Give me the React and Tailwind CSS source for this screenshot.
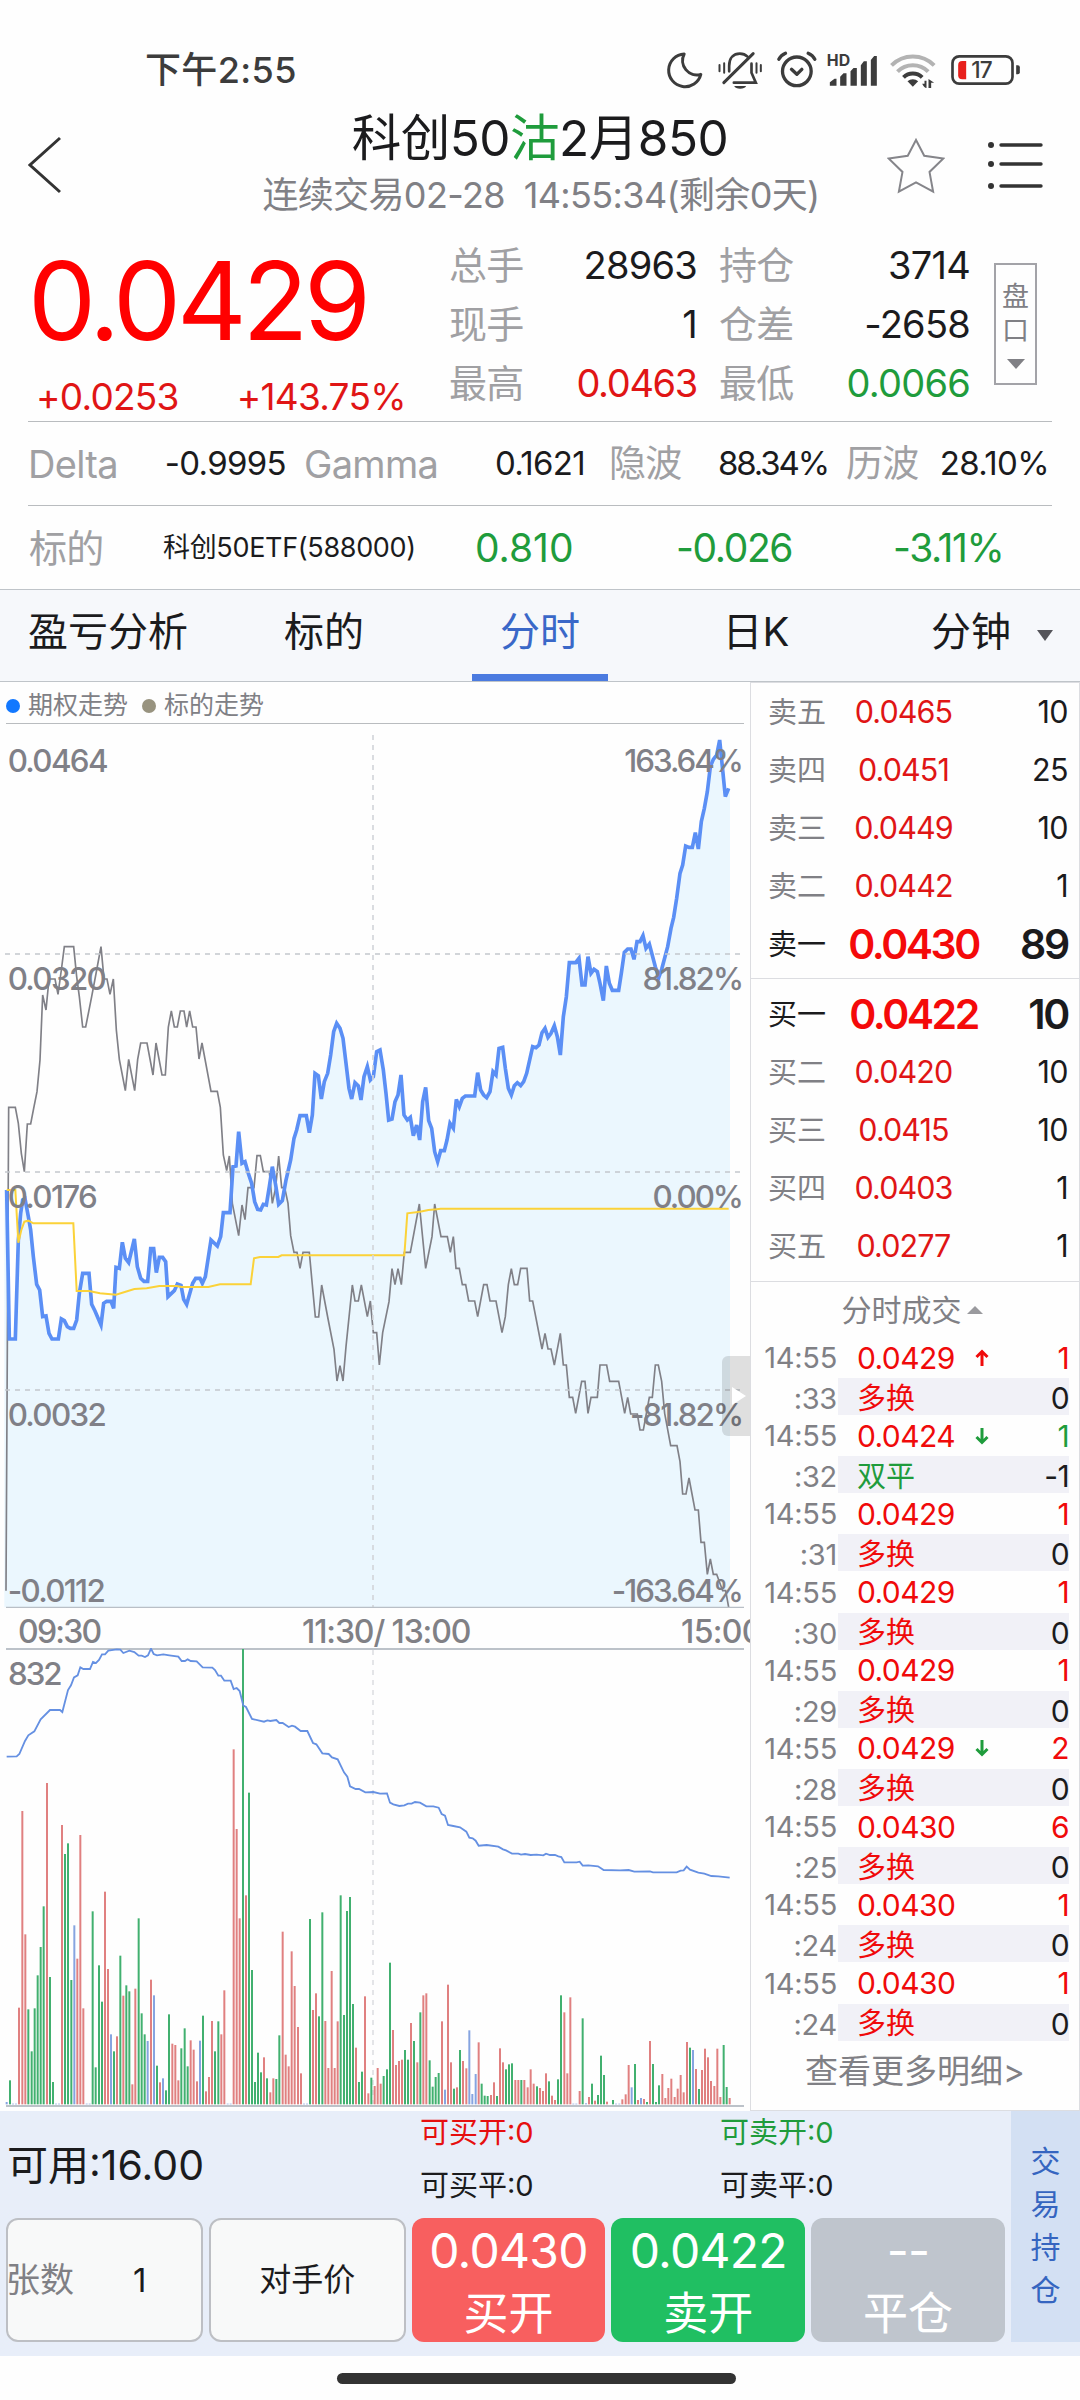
import { useState } from "react";

const tabs = ["盈亏分析", "标的", "分时", "日K", "分钟"];

const asks = [
  { label: "卖五", price: "0.0465", qty: "10" },
  { label: "卖四", price: "0.0451", qty: "25" },
  { label: "卖三", price: "0.0449", qty: "10" },
  { label: "卖二", price: "0.0442", qty: "1" },
  { label: "卖一", price: "0.0430", qty: "89", best: true },
];

const bids = [
  { label: "买一", price: "0.0422", qty: "10", best: true },
  { label: "买二", price: "0.0420", qty: "10" },
  { label: "买三", price: "0.0415", qty: "10" },
  { label: "买四", price: "0.0403", qty: "1" },
  { label: "买五", price: "0.0277", qty: "1" },
];

const ticks = [
  { sec: ":33", price: "0.0429", dir: "up", qty: "1", kind: "多换", change: "0" },
  { sec: ":32", price: "0.0424", dir: "down", qty: "1", kind: "双平", change: "-1", green: true },
  { sec: ":31", price: "0.0429", qty: "1", kind: "多换", change: "0" },
  { sec: ":30", price: "0.0429", qty: "1", kind: "多换", change: "0" },
  { sec: ":29", price: "0.0429", qty: "1", kind: "多换", change: "0" },
  { sec: ":28", price: "0.0429", dir: "down", qty: "2", kind: "多换", change: "0" },
  { sec: ":25", price: "0.0430", qty: "6", kind: "多换", change: "0" },
  { sec: ":24", price: "0.0430", qty: "1", kind: "多换", change: "0" },
  { sec: ":24", price: "0.0430", qty: "1", kind: "多换", change: "0" },
];

// Chart units are a third of a pixel. Afternoon points start from the noon offset.
const NOON = 1110;

const optionMorning =
  "20,1530 28,1977 46,1977 55,1680 62,1600 68,1560 75,1556 85,1610 92,1650 100,1730 110,1813 119,1830 128,1910 138,1908 147,1960 156,1977 175,1977 184,1917 193,1922 202,1940 211,1945 221,1945 230,1920 238,1840 248,1780 267,1780 275,1873 285,1893 303,1935 311,1870 320,1864 333,1864 341,1885 348,1762 358,1765 367,1687 376,1735 386,1748 403,1677 412,1760 422,1795 432,1804 443,1804 452,1706 461,1706 469,1778 478,1732 488,1732 497,1745 504,1850 523,1832 532,1812 543,1816 551,1858 560,1873 578,1810 587,1795 600,1795 607,1810 616,1790 633,1680 652,1698 662,1670 670,1598 690,1598 699,1460 708,1458 716,1355 726,1450 735,1445 745,1480 755,1510 764,1565 773,1588 782,1590 790,1573 799,1575 808,1520 817,1460 827,1515 836,1573 847,1562 858,1500 872,1440 882,1375 890,1350 900,1307 919,1307 928,1358 937,1305 945,1180 955,1187 964,1257 973,1205 983,1180 992,1125 1001,1055 1010,1030 1020,1045 1029,1075 1038,1150 1047,1225 1055,1257 1065,1208 1075,1218 1083,1260 1092,1190 1102,1160 1111,1200";
const optionAfternoon =
  "10,1190 20,1115 30,1110 40,1170 48,1240 56,1320 66,1317 75,1265 84,1245 93,1185 102,1305 112,1320 121,1312 130,1367 140,1335 149,1380 158,1265 167,1222 176,1322 185,1345 194,1415 203,1445 212,1412 223,1412 231,1380 240,1330 250,1345 259,1258 268,1280 277,1255 286,1248 314,1248 323,1178 332,1230 341,1245 350,1253 360,1235 369,1175 378,1185 387,1105 398,1102 406,1165 415,1225 424,1245 433,1217 442,1208 452,1217 461,1205 470,1180 488,1100 498,1103 507,1095 516,1058 525,1045 534,1072 543,1060 553,1037 562,1070 571,1125 580,1010 589,950 598,848 617,848 627,835 636,915 645,915 654,830 663,880 672,868 682,875 690,910 700,962 709,858 718,910 727,931 746,931 754,880 763,817 773,807 783,807 792,838 801,785 810,785 819,767 828,805 838,792 856,860 866,893 875,868 893,800 903,745 911,712 920,655 930,580 938,555 947,498 957,502 967,502 976,458 985,507 994,425 1003,385 1012,335 1021,260 1030,238 1040,225 1049,180 1058,270 1066,350 1076,325";

const underlyingMorning =
  "18,2732 22,2000 26,1282 46,1282 55,1330 64,1420 73,1475 82,1332 92,1332 101,1285 111,1235 120,1140 128,945 138,990 147,897 165,897 174,943 184,870 193,800 221,800 230,890 238,950 248,1041 257,1041 275,950 285,897 303,800 312,897 321,897 330,943 340,897 349,1050 358,1138 376,1232 386,1138 404,1232 413,1138 422,1089 441,1089 459,1185 468,1089 486,1185 496,1185 505,1041 514,993 523,1041 532,1041 541,993 552,993 560,1041 569,993 578,1041 588,1041 597,1137 606,1089 633,1234 652,1234 661,1282 670,1425 680,1472 688,1428 697,1570 716,1667 726,1575 735,1619 744,1523 762,1523 771,1427 781,1427 790,1475 808,1475 817,1570 827,1523 836,1428 845,1523 854,1523 864,1570 872,1667 882,1717 891,1717 900,1765 909,1717 928,1717 937,1815 946,1911 956,1911 965,1815 983,1911 1002,2008 1011,2103 1020,2057 1029,2103 1038,2000 1057,1815 1065,1863 1075,1863 1084,1815 1102,1910 1111,1863";
const underlyingAfternoon =
  "10,1958 20,1958 28,2055 38,1958 57,1865 66,1766 75,1814 84,1766 94,1814 103,1717 121,1717 148,1572 167,1765 186,1670 194,1572 213,1670 232,1670 241,1717 250,1670 258,1765 268,1765 277,1814 287,1814 296,1863 314,1863 323,1910 341,1814 351,1814 360,1863 378,1863 396,1958 406,1910 415,1814 424,1766 433,1814 443,1814 452,1765 471,1765 479,1863 488,1863 516,2007 525,1960 534,2007 543,2007 553,2055 571,1960 580,2055 589,2055 598,2152 608,2152 617,2200 635,2104 645,2104 654,2200 663,2152 682,2152 690,2055 710,2055 719,2104 746,2104 764,2200 773,2152 782,2202 802,2202 810,2250 820,2250 838,2152 847,2152 856,2055 865,2055 875,2104 884,2200 902,2297 921,2297 930,2345 938,2442 948,2442 957,2394 975,2490 985,2490 993,2587 1003,2587 1012,2683 1021,2637 1030,2683 1040,2683 1058,2732 1067,2732 1076,2782";

const averageLine =
  "20,1530 46,1530 55,1688 64,1650 73,1625 85,1622 100,1630 220,1630 230,1833 267,1833 300,1840 348,1844 403,1827 440,1825 478,1818 530,1818 545,1821 625,1821 660,1813 752,1813 762,1735 780,1731 835,1731 845,1726 1213,1726 1222,1600 1260,1595 1285,1590 1310,1588 1322,1586 2186,1586";

const openInterestMorning =
  "20,410 50,409 58,402 75,363 85,346 103,334 122,298 150,270 180,270 187,276 204,210 213,196 222,172 233,166 241,142 250,147 270,147 279,126 288,129 297,120 306,103 315,103 325,92 350,88 361,89 370,99 388,92 403,96 416,107 425,107 435,111 444,106 453,86 461,102 471,106 490,103 508,106 535,110 545,123 555,123 563,118 572,123 590,124 608,142 637,143 645,150 655,167 663,167 673,182 692,182 701,207 710,204 719,213 730,257 738,261 756,297 775,301 792,305 802,301 811,303 829,300 838,309 848,309 866,321 876,317 885,320 902,333 922,333 939,369 949,373 967,400 986,402 996,412 1013,418 1032,457 1042,470 1050,499 1067,507 1077,507 1096,517";
const openInterestAfternoon =
  "10,516 30,521 51,520 60,548 70,553 88,558 103,556 114,551 125,551 135,546 150,548 169,559 190,559 206,563 215,582 225,587 234,615 250,618 270,622 289,635 298,653 308,655 317,662 326,677 350,675 385,680 399,688 408,691 426,701 445,701 453,704 465,702 482,705 500,704 520,706 528,701 540,705 555,705 565,709 574,711 583,727 620,727 629,725 638,737 655,736 684,739 701,750 750,751 776,750 793,755 840,754 849,757 920,757 932,752 941,751 950,740 960,749 985,758 1003,761 1024,768 1045,769 1079,773";

// One entry per traded minute: x, top, colour key
const volumeMorning =
  "20 1446 b,30 1381 g,39 1451 b,48 1451 b,57 1163 r,67 573 r,76 943 r,85 1168 g,95 1294 g,104 1165 g,113 1066 g,122 981 g,131 859 g,141 489 r,150 1071 g,159 1386 g,168 1451 b,177 1451 b,186 615 r,195 702 g,204 670 g,214 1080 g,223 916 b,232 1016 r,241 645 r,250 1165 r,260 1451 b,269 1451 b,278 874 g,287 1342 g,297 1036 g,306 1145 g,315 815 r,324 1047 r,333 1243 b,342 1294 g,351 1249 r,361 1007 g,370 1127 r,379 1096 g,388 1114 g,397 1393 r,406 1106 r,416 895 g,425 1180 g,434 1243 g,443 1263 b,453 1079 r,462 1126 b,471 1337 g,480 1387 r,489 1375 b,498 1411 g,507 1183 g,517 1271 r,526 1275 r,535 1381 r,544 1285 g,554 1225 g,563 1339 g,572 1261 r,581 1289 r,591 1384 r,600 1262 b,609 1187 g,618 1414 r,627 1371 r,636 1203 r,645 1294 g,655 1204 g,664 1243 r,673 1111 r,683 1451 b,692 1451 b,701 388 r,710 627 r,719 895 r,729 87 g,738 826 r,747 518 g,756 1050 g,765 1386 g,774 1298 g,783 1357 g,792 1312 r,801 1375 g,811 1417 r,820 1375 r,829 1377 g,838 1246 g,848 935 r,857 1304 r,866 1339 r,875 994 r,884 1098 r,894 1221 r,903 1360 r,912 1451 b,921 1451 b,930 897 g,939 1170 r,948 1120 r,957 1189 g,967 877 g,976 1203 r,985 1344 r,995 1053 r,1004 1344 r,1013 1204 r,1022 826 g,1032 1185 g,1041 873 g,1050 831 g,1059 1152 g,1068 1283 r,1077 1386 g,1086 1355 g,1095 1129 r,1105 1420 r";
const volumeAfternoon =
  "4 1373 g,14 1398 r,23 1344 r,32 1391 r,41 1368 g,51 1348 g,60 1028 g,69 1230 r,78 1335 r,87 1323 r,96 1319 r,105 1290 g,114 1319 g,123 1209 r,132 1263 g,142 1327 r,151 1177 g,160 1126 r,169 1120 r,179 1321 g,188 1400 g,197 1371 g,206 1359 g,216 1204 r,225 1409 b,234 1094 r,243 1327 r,252 1406 g,261 1402 r,270 1290 g,279 1323 r,289 1345 r,298 1231 b,307 1422 b,317 1362 b,326 1267 r,335 1391 g,344 1427 g,353 1428 g,363 1425 r,372 1387 r,381 1428 g,390 1285 r,399 1327 r,408 1348 g,417 1333 g,426 1330 g,436 1380 r,445 1380 r,454 1380 g,463 1380 r,473 1402 r,482 1348 r,491 1391 r,501 1399 g,510 1404 r,519 1413 r,528 1360 r,537 1384 g,546 1427 r,555 1440 r,564 1378 g,573 1126 g,583 1177 r,592 1360 r,601 1132 r,610 1451 b,619 1451 b,629 1413 r,638 1195 g,648 1450 b,657 1431 r,666 1391 g,675 1442 r,684 1425 g,693 1307 g,702 1365 g,711 1445 r,729 1440 g,738 1451 b,748 1451 b,757 1438 r,767 1423 r,776 1335 r,785 1402 b,795 1332 g,804 1440 r,813 1434 b,822 1437 r,831 1446 g,840 1263 r,849 1332 g,858 1446 g,867 1396 g,877 1362 r,886 1434 r,895 1404 r,904 1376 r,914 1431 r,923 1406 r,932 1365 r,941 1417 r,951 1266 r,960 1283 g,969 1290 b,978 1347 r,987 1407 g,996 1350 r,1005 1286 r,1014 1312 r,1023 1383 r,1033 1398 r,1042 1286 r,1051 1431 r,1061 1275 g,1070 1401 g,1079 1434 r";

const barColors = { r: "#e08080", g: "#41b06f", b: "#86a4e0" };

function shift(points, dx) {
  return points
    .split(" ")
    .map((p) => {
      const [x, y] = p.split(",");
      return `${Number(x) + dx},${y}`;
    })
    .join(" ");
}

function parseBars(text, dx) {
  return text.split(",").map((b) => {
    const [x, top, color] = b.split(" ");
    return { x: Number(x) + dx, top: Number(top), color };
  });
}

const optionLine = `${optionMorning} ${shift(optionAfternoon, NOON)}`;
const underlyingLine = `${underlyingMorning} ${shift(underlyingAfternoon, NOON)}`;
const openInterestLine = `${openInterestMorning} ${shift(openInterestAfternoon, NOON)}`;
const bars = [...parseBars(volumeMorning, 0), ...parseBars(volumeAfternoon, NOON)];

export default function App() {
  const [tab, setTab] = useState("分时");

  return (
    <main className="flex h-[2400px] w-[1080px] flex-col overflow-hidden bg-[#fefefe] font-['Inter','Noto_Sans_CJK_SC',sans-serif] text-[#1b1b1d]">
      <StatusBar />
      <Header />
      <Quote />
      <Greeks />
      <Underlying />
      <Tabs tab={tab} onChange={setTab} />
      <div className="flex h-[1429px] shrink-0">
        <Charts />
        <OrderBook />
      </div>
      <TradePanel />
      <div className="mt-[17px] ml-[337px] h-[11px] w-[399px] rounded-full bg-[#333]" />
    </main>
  );
}

function StatusBar() {
  return (
    <div className="flex h-[104px] shrink-0 items-center justify-between pt-9 pr-[58px] pl-[145px] text-[#3c3c3c]">
      <span className="text-[36px] leading-none font-medium tracking-[0.01em]">下午2:55</span>
      <svg className="h-10 w-[357px]" viewBox="30 30 1070 120" fill="none" stroke="#3c3c3c">
        <path d="M87 42A49 49 0 1 0 137 103A43 43 0 0 1 87 42Z" strokeWidth="9" strokeLinejoin="round" />
        <g strokeWidth="8" strokeLinecap="round">
          <path d="M193 75v19M207 70v28M304 70v28M317 75v19" strokeWidth="6" />
          <path d="M222 94V78C222 53 236 41 254 41C264 41 271 44 277 50M289 71V98L302 128H236" />
          <path d="M294 41L206 128" strokeWidth="9" />
          <path d="M237 138h36a19 12 0 0 1-36 0Z" fill="#3c3c3c" stroke="none" />
        </g>
        <g strokeWidth="10" strokeLinecap="round" strokeLinejoin="round">
          <circle cx="425" cy="94" r="43" />
          <path d="M371 58C375 50 382 44 391 40M479 58C475 50 468 44 459 40" />
          <path d="M409 88L425 103L440 88" />
        </g>
        <g fill="#3c3c3c" stroke="none">
          <path d="M524 137v-10l14-11h6v21ZM555 137v-27l10-10h9v37ZM586 137V94l9-10h10v53ZM617 137V76l9-12h9v73ZM647 137V60l10-12h8v89Z" />
          <text x="515" y="78" fontSize="47" fontWeight="700" textLength="70" lengthAdjust="spacingAndGlyphs">
            HD
          </text>
          <path d="M757 124a24 24 0 0 1 32 0l-16 16Z" />
          <path d="M808 122h6v22c-5 0-8-4-13-13h7ZM820 144v-27l17 11h-9v16Z" />
        </g>
        <g strokeWidth="12">
          <path d="M709 76a90 90 0 0 1 128 0" stroke="#b3b3b3" />
          <path d="M727 95a65 65 0 0 1 92 0" stroke="#b3b3b3" />
          <path d="M745 112a40 40 0 0 1 56 0" />
        </g>
        <rect x="892" y="49" width="180" height="82" rx="20" strokeWidth="8" />
        <path d="M1083 76h5q6 0 6 6v15q0 6-6 6h-5Z" fill="#3c3c3c" stroke="none" />
        <path d="M933 63v55h-12q-12 0-12-12V75q0-12 12-12Z" fill="#e8201c" stroke="none" />
        <text x="948" y="115" fontSize="68" fontWeight="500" fill="#3c3c3c" stroke="none" textLength="65">
          17
        </text>
      </svg>
    </div>
  );
}

function Header() {
  return (
    <div className="grid h-32 shrink-0 grid-cols-[200px_1fr_200px]">
      <svg className="mt-8 ml-7 h-[60px] w-9" viewBox="0 0 36 60" fill="none" stroke="#333" strokeWidth="3">
        <path d="M32 2L2 29L32 56" />
      </svg>
      <div className="flex flex-col items-center pt-px whitespace-nowrap">
        <h1 className="text-[49.5px] leading-[66px] tracking-[-0.01em]">
          科创50<span className="text-[#1f9c3c]">沽</span>2月850
        </h1>
        <p className="pl-0.5 text-[36px] leading-[48px] tracking-[-0.018em] whitespace-pre text-[#808085]">
          连续交易02-28  14:55:34(剩余0天)
        </p>
      </div>
      <div className="flex pl-[7px]">
        <svg className="mt-[33px] h-[58px] w-[58px]" viewBox="695 292 176 170" fill="none" stroke="#85858a" strokeWidth="6">
          <path d="M783 298L758 346L700 354L742 395L731 455L783 427L835 455L824 395L866 354L808 346Z" />
        </svg>
        <svg className="mt-[35px] ml-[42px] h-[54px] w-[56px]" viewBox="0 0 56 54" stroke="#333" strokeWidth="3.4" strokeLinecap="round">
          <path d="M14 6H54M14 25H54M14 47H54" />
          <path d="M4 6h.01M4 25h.01M4 47h.01" strokeWidth="6" />
        </svg>
      </div>
    </div>
  );
}

function Quote() {
  const rows = [
    ["总手", "28963", "持仓", "3714"],
    ["现手", "1", "仓差", "-2658"],
    ["最高", "0.0463", "最低", "0.0066"],
  ];
  return (
    <div className="mx-7 flex h-[190px] shrink-0 border-b border-[#b9bcbf]">
      <div className="w-[421px] text-[#e01515]">
        <div className="text-[108px] leading-[138px] tracking-[-0.04em] text-[#ff0000]">0.0429</div>
        <div className="flex gap-[58px] pl-2 text-[37px] leading-[54px] tracking-[-0.02em]">
          <span>+0.0253</span>
          <span>+143.75%</span>
        </div>
      </div>
      <div className="pt-[3px]">
        {rows.map(([a, av, b, bv], i) => (
          <div key={a} className="flex h-[59px] items-center text-[38px] leading-none tracking-[-0.02em]">
            <span className="w-[90px] text-[#a0a0a3]">{a}</span>
            <span className={`w-[158px] text-right ${i === 2 ? "tracking-[-0.035em] text-[#e01515]" : ""}`}>{av}</span>
            <span className="ml-[22px] w-[90px] text-[#a0a0a3]">{b}</span>
            <span className={`w-[161px] text-right ${i === 2 ? "text-[#1f9c3c]" : ""}`}>{bv}</span>
          </div>
        ))}
      </div>
      <div className="mt-[31px] ml-[24px] flex h-[122px] w-[43px] flex-col items-center border-2 border-[#a3a3a8] pt-[15px] text-[27px] leading-[34px] text-[#808085]">
        <span>盘</span>
        <span>口</span>
        <div className="mt-[11px] border-x-[9px] border-t-[10px] border-x-transparent border-t-[#808085]" />
      </div>
    </div>
  );
}

function Greeks() {
  return (
    <div className="mx-7 flex h-[84px] shrink-0 items-center border-b border-[#b9bcbf] text-[33px] leading-none tracking-[-0.02em] whitespace-nowrap">
      <span className="w-[95px] text-[38px] text-[#a0a0a3]">Delta</span>
      <span className="w-[163px] text-right">-0.9995</span>
      <span className="w-[134px] pl-[18px] text-[38px] text-[#a0a0a3]">Gamma</span>
      <span className="w-[165px] text-right">0.1621</span>
      <span className="w-[100px] pl-6 text-[37px] text-[#a0a0a3]">隐波</span>
      <span className="w-[143px] text-right tracking-[-0.065em]">88.34%</span>
      <span className="w-[91px] pl-[18px] text-[37px] text-[#a0a0a3]">历波</span>
      <span className="w-[130px] text-right">28.10%</span>
    </div>
  );
}

function Underlying() {
  return (
    <div className="mx-7 flex h-[83px] shrink-0 items-center text-[39px] leading-none tracking-[-0.02em] whitespace-nowrap text-[#1f9c3c]">
      <span className="w-[135px] pl-px text-[38px] text-[#a0a0a3]">标的</span>
      <span className="w-[312px] text-[27px] tracking-[-0.012em] text-[#1b1b1d]">科创50ETF(588000)</span>
      <span className="w-[201px] tracking-normal">0.810</span>
      <span className="w-[217px] tracking-[-0.035em]">-0.026</span>
      <span className="tracking-[-0.035em]">-3.11%</span>
    </div>
  );
}

function Tabs({ tab, onChange }) {
  return (
    <div className="flex h-[93px] shrink-0 border-y border-[#bfc4c9] bg-[#f6f8fb] text-[40px] leading-[84px]">
      {tabs.map((name) => (
        <button
          key={name}
          className={`relative flex w-[216px] justify-center ${tab === name ? "text-[#3a68c8]" : ""} ${name === "分钟" ? "pl-10" : ""}`}
          onClick={() => onChange(name)}
        >
          {name}
          {name === "分钟" && (
            <div className="mt-[40px] ml-[26px] border-x-[8px] border-t-[11px] border-x-transparent border-t-[#55555a]" />
          )}
          {tab === name && <div className="absolute bottom-0 left-[40px] h-[7px] w-[136px] bg-[#4b7be0]" />}
        </button>
      ))}
    </div>
  );
}

function Charts() {
  return (
    <section className="relative w-[750px] overflow-hidden">
      <div className="mx-1.5 flex h-[42px] items-center border-b border-[#b9bcbf] pt-1.5 text-[25px] leading-none text-[#808085]">
        <i className="mr-2 size-3.5 rounded-full bg-[#1278ff]" />
        期权走势
        <i className="mr-2 ml-[14px] size-3.5 rounded-full bg-[#98937f]" />
        标的走势
      </div>
      <PriceChart />
      <div className="flex h-[40px] items-center pt-[7px] text-[32px] leading-none font-medium tracking-[-0.055em] whitespace-nowrap text-[#808085]">
        <span className="w-[302px] shrink-0 pl-[18px]">09:30</span>
        <span className="w-[379px] shrink-0 tracking-[-0.035em]">11:30/ 13:00</span>
        <span className="tracking-[-0.02em]">15:00</span>
      </div>
      <VolumeChart />
      <div className="absolute top-[674px] right-0 flex h-20 w-7 items-center rounded-l-md bg-black/12 pl-2.5">
        <div className="border-y-[9px] border-l-[14px] border-y-transparent border-l-white" />
      </div>
    </section>
  );
}

function PriceChart() {
  const labels = [
    [277, "0.0464", "163.64%"],
    [931, "0.0320", "81.82%"],
    [1585, "0.0176", "0.00%"],
    [2239, "0.0032", "-81.82%"],
    [2766, "-0.0112", "-163.64%"],
  ];
  return (
    <svg className="block h-[884px] w-[750px]" viewBox="0 132 2250 2652" fill="none">
      <polygon points={`13,2782 13,1530 ${optionLine} 2190,325 2190,2782`} fill="#ebf7fe" />
      <polyline points={underlyingLine} stroke="#808087" strokeWidth="5" />
      <polyline points={optionLine} stroke="#5b8ff5" strokeWidth="11" />
      <polyline points={averageLine} stroke="#fbd239" strokeWidth="6" />
      <g stroke="#c3c8cd" strokeWidth="5" strokeDasharray="15 15">
        <path d="M15 822H2220M15 1476H2220M15 2130H2220" />
        <path d="M1119 165V2782" stroke="#d3d6da" />
      </g>
      <path d="M18 2782H2232" stroke="#b9bfc6" strokeWidth="4" />
      <g fill="#808087" fontSize="94" fontWeight="500">
        {labels.map(([y, left, right]) => (
          <g key={y}>
            <text x="23" y={y} letterSpacing="-5">
              {left}
            </text>
            <text x="2226" y={y} textAnchor="end" letterSpacing="-6">
              {right}
            </text>
          </g>
        ))}
      </g>
    </svg>
  );
}

function VolumeChart() {
  return (
    <svg className="block h-[460px] w-[750px]" viewBox="0 84 2250 1380" fill="none">
      <path d="M1119 90V1452" stroke="#e4e5e8" strokeWidth="6" strokeDasharray="15 15" />
      <path d="M18 87H2232M18 1458H2232" stroke="#bcc2c9" strokeWidth="6" />
      {bars.map((b) => (
        <rect key={b.x} x={b.x - 3} y={b.top} width="6" height={1453 - b.top} fill={barColors[b.color]} />
      ))}
      <polyline points={openInterestLine} stroke="#6590e2" strokeWidth="5.5" />
      <text x="24" y="194" fill="#808087" fontSize="94" fontWeight="500" letterSpacing="-6">
        832
      </text>
    </svg>
  );
}

function BookRow({ label, price, qty, best }) {
  return (
    <div className="flex h-[58px] items-center leading-none">
      <span className={`w-[72px] text-[29px] ${best ? "" : "text-[#808085]"}`}>{label}</span>
      {best ? (
        <>
          <span className="w-[147px] text-center text-[41px] font-semibold tracking-[-0.06em] text-[#f40a0a]">{price}</span>
          <span className="flex-1 text-right text-[41px] font-semibold tracking-[-0.055em]">{qty}</span>
        </>
      ) : (
        <>
          <span className="w-[127px] text-center text-[30.5px] tracking-[-0.03em] text-[#e01515]">{price}</span>
          <span className="flex-1 text-right text-[30.5px] tracking-[-0.02em]">{qty}</span>
        </>
      )}
    </div>
  );
}

function OrderBook() {
  return (
    <section className="flex w-[330px] flex-col border border-[#dcdde1] text-[#1b1b1d]">
      <div className="h-[296px] border-b border-[#dcdde1] pr-[11px] pl-[17px]">
        {asks.map((row) => (
          <BookRow key={row.label} {...row} />
        ))}
      </div>
      <div className="h-[303px] border-b border-[#dcdde1] pt-[6px] pr-[11px] pl-[17px]">
        {bids.map((row) => (
          <BookRow key={row.label} {...row} />
        ))}
      </div>
      <div className="flex h-[55px] items-center justify-center pr-1.5 text-[30px] leading-none text-[#808085]">
        分时成交
        <div className="ml-[5px] border-x-[8px] border-b-[8px] border-x-transparent border-b-[#9a9a9e]" />
      </div>
      {ticks.map((t, i) => (
        <Tick key={i} {...t} />
      ))}
      <div className="mt-[9px] text-center text-[33px] leading-[42px] text-[#808085]">查看更多明细&gt;</div>
    </section>
  );
}

function Tick({ sec, price, dir, qty, kind, change, green }) {
  return (
    <div className="flex h-[78.2px] shrink-0 pr-[10px] text-[30px] tracking-[-0.02em]">
      <div className="w-[86px] text-right text-[29px] leading-[41px] tracking-[-0.01em] text-[#808085]">
        <div>14:55</div>
        <div>{sec}</div>
      </div>
      <div className="ml-px flex-1">
        <div className="flex h-[41px] items-center pl-[19px] leading-none text-[#f00a0a]">
          <span className="w-[116px]">{price}</span>
          <span className="w-[32px]">{dir && <Arrow dir={dir} />}</span>
          <span className={`flex-1 text-right ${green ? "text-[#1f9c3c]" : ""}`}>{qty}</span>
        </div>
        <div className="flex h-[37px] items-center justify-between bg-[#f1f1f7] pt-[3px] pl-[19px] leading-none">
          <span className={`text-[29px] tracking-normal ${green ? "text-[#1f9c3c]" : "text-[#f00a0a]"}`}>{kind}</span>
          <span>{change}</span>
        </div>
      </div>
    </div>
  );
}

function Arrow({ dir }) {
  return (
    <svg
      className={dir === "up" ? "size-[18px]" : "size-[18px] rotate-180"}
      viewBox="0 0 18 18"
      fill="none"
      stroke={dir === "up" ? "#f00a0a" : "#1f9c3c"}
      strokeWidth="3"
    >
      <path d="M9 17V2.5M3.5 8L9 2.5L14.5 8" />
    </svg>
  );
}

function TradePanel() {
  return (
    <div className="flex h-[245px] shrink-0 bg-[#e8eef9]">
      <div className="flex w-[1011px] flex-col">
        <div className="flex h-[107px]">
          <div className="w-[420px] pl-[7px] text-[41px] leading-[109px]">可用:16.00</div>
          <div className="w-[300px] text-[29px] leading-[53px]">
            <div className="-mt-[5px] text-[#e60f0f]">可买开:0</div>
            <div>可买平:0</div>
          </div>
          <div className="text-[29px] leading-[53px]">
            <div className="-mt-[5px] text-[#1f9c3c]">可卖开:0</div>
            <div>可卖平:0</div>
          </div>
        </div>
        <div className="flex h-[124px] gap-[6px] px-[6px]">
          <div className="flex w-[197px] items-center rounded-xl border-2 border-[#bdbfc4] bg-[#f8f9f9] text-[33px] leading-none">
            <span className="-ml-0.5 w-[127px] text-[34px] text-[#808085]">张数</span>1
          </div>
          <div className="flex w-[197px] items-center justify-center rounded-xl border-2 border-[#bdbfc4] bg-[#f8f9f9] text-[32px] leading-none">
            对手价
          </div>
          <OrderButton price="0.0430" label="买开" color="bg-[#f85f5f]" />
          <OrderButton price="0.0422" label="卖开" color="bg-[#20bf62]" />
          <OrderButton price="--" label="平仓" color="bg-[#bfc5cd]" />
        </div>
      </div>
      <div className="flex h-[231px] flex-1 flex-col items-center bg-[#d3e0f3] pt-[29px] text-[30px] leading-[43px] text-[#3565c0]">
        <span>交</span>
        <span>易</span>
        <span>持</span>
        <span>仓</span>
      </div>
    </div>
  );
}

function OrderButton({ price, label, color }) {
  return (
    <button className={`flex w-[194px] flex-col items-center rounded-xl text-white ${color}`}>
      <span className="text-[48px] leading-[65px] tracking-[-0.015em]">{price}</span>
      <span className="text-[45px] leading-[62px]">{label}</span>
    </button>
  );
}
